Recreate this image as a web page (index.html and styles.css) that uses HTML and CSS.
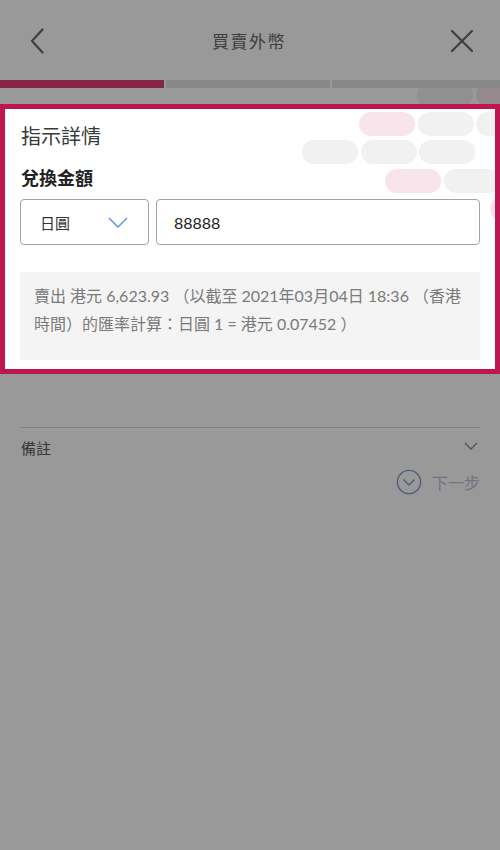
FILE: index.html
```html
<!DOCTYPE html>
<html lang="zh-Hant">
<head>
<meta charset="utf-8">
<title>買賣外幣</title>
<link rel="stylesheet" href="styles.css">
</head>
<body>
<div class="page">
  <div class="deco" aria-hidden="true">
    <div class="deco-row r0"><span class="pill"></span><span class="pill pink"></span></div>
    <div class="deco-row r1"><span class="pill pink"></span><span class="pill"></span><span class="pill"></span></div>
    <div class="deco-row r2"><span class="pill"></span><span class="pill"></span><span class="pill"></span></div>
    <div class="deco-row r3"><span class="pill pink"></span><span class="pill"></span></div>
    <div class="deco-row r4"><span class="pill pink"></span></div>
  </div>

  <header class="topbar">
    <svg class="icon back" viewBox="0 0 14 26" width="14" height="26"><path d="M12.5 1.5 L2 13 L12.5 24.5" fill="none" stroke="currentColor" stroke-width="2.2" stroke-linecap="round" stroke-linejoin="round"/></svg>
    <h1 class="title">買賣外幣</h1>
    <svg class="icon close" viewBox="0 0 24 24" width="24" height="24"><path d="M2 2 L22 22 M22 2 L2 22" fill="none" stroke="currentColor" stroke-width="2.2" stroke-linecap="round"/></svg>
  </header>

  <div class="progress">
    <span class="seg done"></span><span class="seg"></span><span class="seg"></span>
  </div>

  <section class="card">
    <h2 class="card-title">指示詳情</h2>
    <h3 class="label">兌換金額</h3>
    <div class="fields">
      <div class="select">
        <span>日圓</span>
        <svg class="chev" viewBox="0 0 20 11" width="20" height="11"><path d="M1 1 L10 10 L19 1" fill="none" stroke="currentColor" stroke-width="1.4"/></svg>
      </div>
      <div class="amount">88888</div>
    </div>
    <div class="info">賣出 港元 6,623.93 （以截至 2021年03月04日 18:36 （香港時間）的匯率計算：日圓 1 = 港元 0.07452 ）</div>
  </section>

  <div class="remark">
    <span>備註</span>
    <svg class="rchev" viewBox="0 0 14 8" width="14" height="8"><path d="M1 1 L7 7 L13 1" fill="none" stroke="currentColor" stroke-width="1.3"/></svg>
  </div>

  <div class="next">
    <svg class="next-icon" viewBox="0 0 26 26" width="26" height="26"><circle cx="13" cy="13" r="11.6" fill="none" stroke="currentColor" stroke-width="1.4"/><path d="M7.5 10.5 L13 16 L18.5 10.5" fill="none" stroke="currentColor" stroke-width="1.4"/></svg>
    <span class="next-text">下一步</span>
  </div>
</div>
</body>
</html>
```
FILE: styles.css
```css
html, body {
  margin: 0;
  padding: 0;
  background: #ffffff;
}
body {
  width: 500px;
  height: 850px;
  overflow: hidden;
  font-family: "Noto Sans CJK TC", "Noto Sans", sans-serif;
}
.page {
  position: relative;
  width: 500px;
  height: 850px;
  background: #ffffff;
  overflow: hidden;
}
.deco {
  position: absolute;
  left: 0;
  top: 83px;
  width: 500px;
  display: flex;
  flex-direction: column;
  gap: 4.5px;
  overflow: hidden;
}
.deco-row {
  display: flex;
  gap: 2.5px;
  height: 24px;
  white-space: nowrap;
}
.r0 { padding-left: 417px; }
.r1 { padding-left: 359px; }
.r2 { padding-left: 302px; }
.r3 { padding-left: 385px; }
.r4 { padding-left: 490px; }
.pill {
  flex: 0 0 56px;
  height: 24px;
  border-radius: 12px;
  background: #f1f1f1;
}
.pill.pink { background: #f8e5eb; }

.topbar {
  position: relative;
  height: 80px;
  display: flex;
  align-items: center;
  justify-content: space-between;
  padding: 0 26px 0 30px;
  box-sizing: border-box;
  color: #6a6a6a;
}
.icon { display: block; }
.back { margin-top: 2px; }
.close { margin-top: 2px; }
.title {
  margin: 0 0 0 4px;
  font-size: 17px;
  font-weight: 400;
  color: #686868;
  letter-spacing: 1.5px;
}

.progress {
  position: relative;
  display: grid;
  grid-template-columns: 164px 164px 1fr;
  gap: 2px;
  height: 8px;
}
.seg { background: #e1e1e1; }
.seg.done { background: #dc3e75; }

.card {
  position: relative;
  z-index: 2;
  margin-top: 16px;
  border: 5px solid #bf1651;
  padding: 13px 15px 9px 15px;
  box-shadow: 0 0 0 1200px rgba(0, 0, 0, 0.4);
}
.card-title {
  margin: 0;
  font-size: 20px;
  line-height: 28px;
  font-weight: 400;
  color: #3a3a3a;
  padding-left: 1px;
}
.label {
  margin: 15px 0 0 0;
  font-size: 18px;
  line-height: 24px;
  font-weight: 700;
  color: #222;
  padding-left: 1px;
}
.fields {
  margin-top: 10px;
  display: grid;
  grid-template-columns: 129px 1fr;
  gap: 7px;
}
.select, .amount {
  height: 46px;
  box-sizing: border-box;
  border: 1px solid #a4a4a4;
  border-radius: 4px;
  background: #fff;
  display: flex;
  align-items: center;
}
.select {
  justify-content: space-between;
  padding: 0 20px 0 19px;
  font-size: 15px;
  color: #333;
}
.chev { color: #5a8ee0; margin-top: 1px; }
.amount {
  padding-left: 17px;
  font-family: "Lato", "Noto Sans CJK TC", sans-serif;
  font-size: 16px;
  color: #222;
}
.info {
  margin-top: 27px;
  background: #f4f4f4;
  height: 88px;
  box-sizing: border-box;
  padding: 10px 14px 0 14px;
  font-family: "Lato", "Noto Sans CJK TC", sans-serif;
  font-size: 16px;
  line-height: 28px;
  color: #7a7a7a;
}

.remark {
  margin: 53px 20px 0 20px;
  border-top: 1px solid #d8d8d8;
  height: 38px;
  display: flex;
  align-items: center;
  justify-content: space-between;
  font-size: 15px;
  color: #5e5e5e;
  padding: 0 2px 0 1px;
}
.rchev { color: #8a8a8a; margin-top: -3px; }

.next {
  display: flex;
  justify-content: flex-end;
  align-items: center;
  gap: 9px;
  margin: 3px 20px 0 20px;
}
.next-icon { color: #8499c9; margin-right: 1px; }
.next-text {
  font-size: 16px;
  color: #b8c1dc;
  letter-spacing: 0;
}
```
